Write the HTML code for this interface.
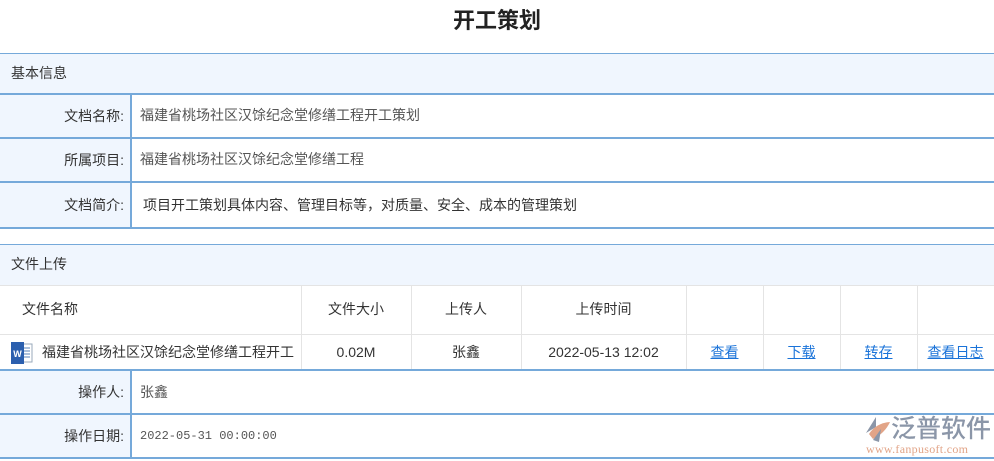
<!DOCTYPE html>
<html><head><meta charset="utf-8"><style>
*{margin:0;padding:0;box-sizing:border-box}
body{width:994px;height:461px;background:#fff;font-family:"Liberation Sans","Noto Sans CJK SC",sans-serif;font-size:14px;color:#333;position:relative;overflow:hidden}
.a{position:absolute}
.t{left:0;width:994px;top:6px;text-align:center;font-size:22px;font-weight:bold;color:#222;line-height:30px}
.hl{left:0;width:994px;height:2px;background:#75a9da}
.sec{left:0;width:994px;background:#f0f6fe;padding-left:11px}
.lab{left:0;width:132px;background:#f0f6fe;border-right:2px solid #75a9da}
.val{left:140px;color:#555}
.gl{height:1px;background:#e4e4e4}
.gv{width:1px;background:#e4e4e4}
.c{text-align:center}
a{color:#1a73d9;text-decoration:underline}
</style></head><body>
<div class="a t">开工策划</div>
<div class="a sec" style="top:53px;height:41px;line-height:41px">基本信息</div>
<div class="a hl" style="top:53px;height:1px"></div>
<div class="a lab" style="top:94px;height:134px"></div>
<div class="a hl" style="top:93px"></div>
<div class="a hl" style="top:137px"></div>
<div class="a hl" style="top:181px"></div>
<div class="a hl" style="top:227px"></div>
<div class="a" style="top:94px;left:0;width:124px;text-align:right;line-height:44px">文档名称:</div>
<div class="a val" style="top:94px;line-height:42px">福建省桃场社区汉馀纪念堂修缮工程开工策划</div>
<div class="a" style="top:138px;left:0;width:124px;text-align:right;line-height:44px">所属项目:</div>
<div class="a val" style="top:138px;line-height:42px">福建省桃场社区汉馀纪念堂修缮工程</div>
<div class="a" style="top:182px;left:0;width:124px;text-align:right;line-height:46px">文档简介:</div>
<div class="a" style="top:182px;left:143px;line-height:46px;color:#333">项目开工策划具体内容、管理目标等，对质量、安全、成本的管理策划</div>

<div class="a sec" style="top:244px;height:41px;line-height:41px">文件上传</div>
<div class="a hl" style="top:244px;height:1px"></div>
<div class="a gl" style="top:285px;left:0;width:994px"></div>
<div class="a gl" style="top:334px;left:0;width:994px"></div>
<div class="a gv" style="top:285px;height:85px;left:301px"></div>
<div class="a gv" style="top:285px;height:85px;left:411px"></div>
<div class="a gv" style="top:285px;height:85px;left:521px"></div>
<div class="a gv" style="top:285px;height:85px;left:686px"></div>
<div class="a gv" style="top:285px;height:85px;left:763px"></div>
<div class="a gv" style="top:285px;height:85px;left:840px"></div>
<div class="a gv" style="top:285px;height:85px;left:917px"></div>
<div class="a" style="top:285px;left:22px;line-height:49px;font-size:14px">文件名称</div>
<div class="a c" style="top:285px;left:301px;width:110px;line-height:49px;font-size:14px">文件大小</div>
<div class="a c" style="top:285px;left:411px;width:110px;line-height:49px;font-size:14px">上传人</div>
<div class="a c" style="top:285px;left:521px;width:165px;line-height:49px;font-size:14px">上传时间</div>
<svg class="a" style="left:10px;top:341px" width="24" height="24" viewBox="0 0 24 24"><rect x="8" y="3" width="14" height="18" fill="#fff" stroke="#9ab" stroke-width="1"/><path d="M11 7h9M11 10h9M11 13h9M11 16h9" stroke="#7a9cc8" stroke-width="1.2"/><rect x="1" y="1" width="13" height="22" fill="#2b5fae"/><text x="7.5" y="16" font-size="9" font-weight="bold" fill="#fff" text-anchor="middle" font-family="Liberation Sans">W</text></svg>
<div class="a" style="top:334px;left:42px;line-height:36px;font-size:14px">福建省桃场社区汉馀纪念堂修缮工程开工</div>
<div class="a c" style="top:334px;left:301px;width:110px;line-height:36px;font-size:14px">0.02M</div>
<div class="a c" style="top:334px;left:411px;width:110px;line-height:36px;font-size:14px">张鑫</div>
<div class="a c" style="top:334px;left:521px;width:165px;line-height:36px;font-size:14px">2022-05-13 12:02</div>
<div class="a c" style="top:334px;left:686px;width:77px;line-height:36px;font-size:14px"><a>查看</a></div>
<div class="a c" style="top:334px;left:763px;width:77px;line-height:36px;font-size:14px"><a>下载</a></div>
<div class="a c" style="top:334px;left:840px;width:77px;line-height:36px;font-size:14px"><a>转存</a></div>
<div class="a c" style="top:334px;left:917px;width:77px;line-height:36px;font-size:14px"><a>查看日志</a></div>

<div class="a lab" style="top:370px;height:88px"></div>
<div class="a hl" style="top:369px"></div>
<div class="a hl" style="top:413px"></div>
<div class="a hl" style="top:457px"></div>
<div class="a" style="top:370px;left:0;width:124px;text-align:right;line-height:44px">操作人:</div>
<div class="a val" style="top:370px;line-height:44px">张鑫</div>
<div class="a" style="top:414px;left:0;width:124px;text-align:right;line-height:44px">操作日期:</div>
<div class="a val" style="top:414px;line-height:44px;font-family:'Liberation Mono','Noto Sans CJK SC',monospace;font-size:12px">2022-05-31 00:00:00</div>

<svg class="a" style="left:864px;top:415px" width="28" height="28" viewBox="0 0 28 28"><path d="M2 18 L12 2 L12 12 Z" fill="#8b96a8"/><path d="M5 19 Q12 8 26 7 Q21 18 9 24 Z" fill="#e2a487"/><path d="M9 25 L17 14 L15 27 Z" fill="#8b96a8"/></svg>
<div class="a" style="left:891px;top:412px;font-size:25px;color:#8b96a8;line-height:30px;font-family:'Noto Sans CJK SC',sans-serif;font-weight:500">泛普软件</div>
<div class="a" style="left:866px;top:442px;font-size:12px;color:#e2a487;font-family:'Liberation Serif',serif;line-height:14px;letter-spacing:0.3px">www.fanpusoft.com</div>
</body></html>
